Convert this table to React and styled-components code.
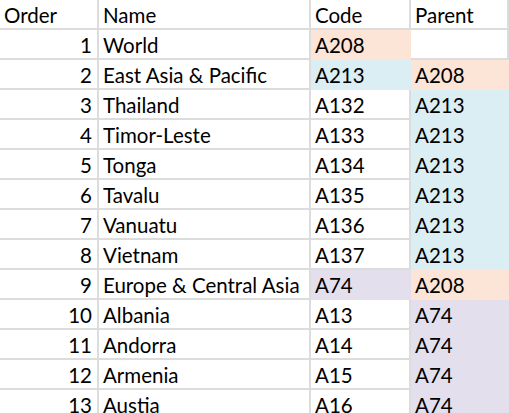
import React from "react";
import styled, { createGlobalStyle } from "styled-components";

const GlobalStyle = createGlobalStyle`
  html, body {
    margin: 0;
    padding: 0;
    background: #ffffff;
    overflow: hidden;
  }
`;

// fill colours from the sheet
const fills = {
  peach: "#fce4d6",
  blue: "#daeef3",
  purple: "#e4dfec",
};

const rows = [
  { order: 1, name: "World", code: "A208", codeFill: "peach", parent: "", parentFill: null },
  { order: 2, name: "East Asia & Pacific", code: "A213", codeFill: "blue", parent: "A208", parentFill: "peach" },
  { order: 3, name: "Thailand", code: "A132", parent: "A213", parentFill: "blue" },
  { order: 4, name: "Timor-Leste", code: "A133", parent: "A213", parentFill: "blue" },
  { order: 5, name: "Tonga", code: "A134", parent: "A213", parentFill: "blue" },
  { order: 6, name: "Tavalu", code: "A135", parent: "A213", parentFill: "blue" },
  { order: 7, name: "Vanuatu", code: "A136", parent: "A213", parentFill: "blue" },
  { order: 8, name: "Vietnam", code: "A137", parent: "A213", parentFill: "blue" },
  { order: 9, name: "Europe & Central Asia", code: "A74", codeFill: "purple", parent: "A208", parentFill: "peach" },
  { order: 10, name: "Albania", code: "A13", parent: "A74", parentFill: "purple" },
  { order: 11, name: "Andorra", code: "A14", parent: "A74", parentFill: "purple" },
  { order: 12, name: "Armenia", code: "A15", parent: "A74", parentFill: "purple" },
  { order: 13, name: "Austia", code: "A16", parent: "A74", parentFill: "purple" },
];

const App = () => {
  return (
    <>
      <GlobalStyle />
      <Sheet>
        <Cell>Order</Cell>
        <Cell>Name</Cell>
        <Cell>Code</Cell>
        <Cell>Parent</Cell>
        {rows.map((r) => (
          <React.Fragment key={r.order}>
            <Cell $right>{r.order}</Cell>
            <Cell>{r.name}</Cell>
            <Cell $fill={fills[r.codeFill]}>{r.code}</Cell>
            <Cell $fill={fills[r.parentFill]}>{r.parent}</Cell>
          </React.Fragment>
        ))}
      </Sheet>
    </>
  );
};

const Sheet = styled.div`
  display: grid;
  grid-template-columns: 99px 212px 100px 1fr;
  grid-auto-rows: 30px;
  width: 509px;
  height: 413px;
  overflow: hidden;
  font-family: "Lato", "Open Sans", sans-serif;
  font-size: 20.5px;
  color: #000;
`;

const Cell = styled.div`
  box-sizing: border-box;
  display: flex;
  align-items: center;
  justify-content: ${(p) => (p.$right ? "flex-end" : "flex-start")};
  padding: 1px ${(p) => (p.$right ? "5px" : "4px")} 0 4px;
  white-space: nowrap;
  overflow: hidden;
  background: ${(p) => p.$fill || "#ffffff"};
  border-right: 2px solid ${(p) => (p.$fill ? "transparent" : "#dcdcdc")};
  border-bottom: 2px solid ${(p) => (p.$fill ? "transparent" : "#dcdcdc")};
`;

export default App;
